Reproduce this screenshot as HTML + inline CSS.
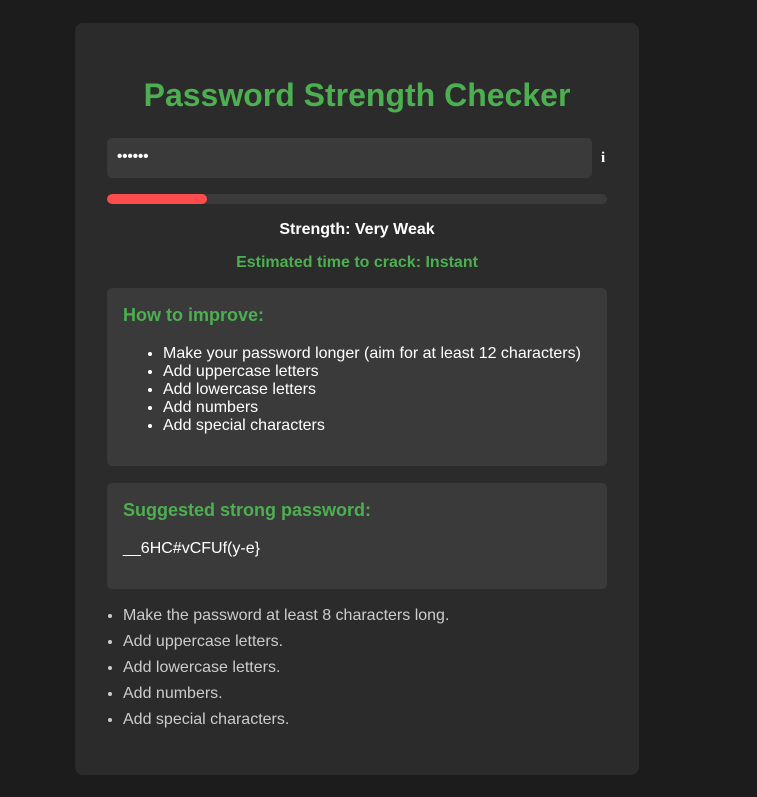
<!DOCTYPE html>
<html><head><meta charset="utf-8"><style>
*{margin:0;padding:0;box-sizing:border-box}
body{width:757px;height:797px;background:#1c1c1c;font-family:"Liberation Sans",Arial,sans-serif;position:relative;overflow:hidden}
.card{position:absolute;left:75px;top:23px;width:564px;height:752px;background:#2b2b2b;border-radius:8px}
.a{position:absolute}
h1{position:absolute;left:0;width:100%;top:54px;text-align:center;color:#4caf50;font-size:32px;font-weight:bold}
.inp{left:32px;top:115px;width:485px;height:40px;background:#3a3a3a;border-radius:5px;color:#fff;font-size:15px;font-weight:bold;padding:10px 10px;letter-spacing:0px}
.bar{left:32px;top:171px;width:500px;height:10px;background:#3a3a3a;border-radius:5px;overflow:hidden}
.bar div{width:100px;height:100%;background:#ff4d4d;border-radius:5px}
.c{left:0;width:100%;text-align:center;font-size:16px;font-weight:bold}
.box{left:32px;width:500px;background:#3a3a3a;border-radius:5px;color:#fff}
.box h3{position:absolute;left:16px;color:#4caf50;font-size:18px;font-weight:bold}
ul{list-style:disc}
.box ul{position:absolute;left:56px;top:57px;font-size:16px;line-height:18px}
.low{left:48px;top:580px;color:#ccc;font-size:16px;line-height:26px}
</style></head><body>
<div class="card">
<h1>Password Strength Checker</h1>
<div class="a inp">••••••</div>
<div class="a" style="left:526px;top:127px;color:#fff;font-family:'Liberation Serif',serif;font-weight:bold;font-size:15px">i</div>
<div class="a bar"><div></div></div>
<div class="a c" style="top:198px;color:#fff">Strength: Very Weak</div>
<div class="a c" style="top:231px;color:#4caf50">Estimated time to crack: Instant</div>
<div class="a box" style="top:265px;height:178px">
<h3 style="top:17px">How to improve:</h3>
<ul><li>Make your password longer (aim for at least 12 characters)</li><li>Add uppercase letters</li><li>Add lowercase letters</li><li>Add numbers</li><li>Add special characters</li></ul>
</div>
<div class="a box" style="top:460px;height:106px">
<h3 style="top:17px">Suggested strong password:</h3>
<div class="a" style="left:16px;top:57px;font-size:16px">__6HC#vCFUf(y-e}</div>
</div>
<ul class="a low"><li>Make the password at least 8 characters long.</li><li>Add uppercase letters.</li><li>Add lowercase letters.</li><li>Add numbers.</li><li>Add special characters.</li></ul>
</div>
</body></html>
